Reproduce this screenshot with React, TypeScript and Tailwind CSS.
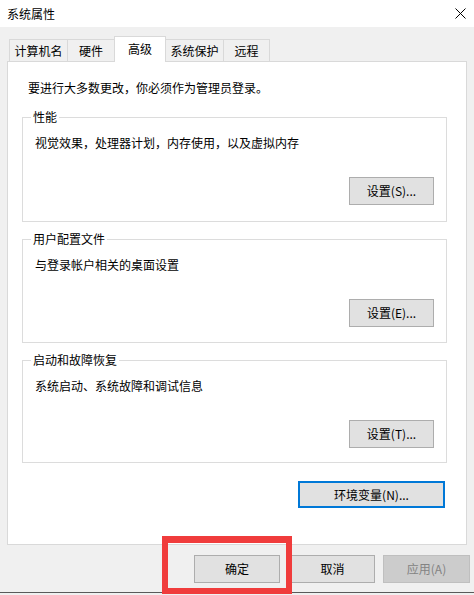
import { ReactNode } from 'react';

const FONT = '[font-family:"Microsoft_YaHei_UI","Noto_Sans_CJK_SC",sans-serif]';

const TABS = [
  { id: 'computer', label: '计算机名', w: 'w-[59px]' },
  { id: 'hardware', label: '硬件',     w: 'w-[48px]' },
  { id: 'advanced', label: '高级',     w: 'w-[52px]' },
  { id: 'protect',  label: '系统保护', w: 'w-[59px]' },
  { id: 'remote',   label: '远程',     w: 'w-[47px]' },
];

function Btn({ children, className = '' }: { children: ReactNode; className?: string }) {
  return (
    <button className={`h-[28px] flex items-center justify-center border border-[#adadad] bg-[#e1e1e1] text-[12px] leading-[16px] text-black ${className}`}>
      {children}
    </button>
  );
}

function Group({ title, text, button, h }: { title: string; text: string; button: string; h: string }) {
  return (
    <div className={`relative w-[425px] ${h} border border-[#dcdcdc] flex flex-col pt-[17px] pl-[12px] pr-[12px]`}>
      <span className="absolute -top-[9px] left-[8px] bg-white px-[2px] text-[12px] leading-[16px]">{title}</span>
      <p className="text-[12px] leading-[16px]">{text}</p>
      <div className="flex justify-end mt-[26px]">
        <Btn className="w-[85px]">{button}</Btn>
      </div>
    </div>
  );
}

export default function App() {
  return (
    <div className={`relative w-[474px] h-[595px] overflow-hidden bg-[#f0f0f0] text-black ${FONT}`}>
      {/* title bar */}
      <div className="h-[27px] bg-white flex items-center justify-between pl-[7px] pr-[8px]">
        <span className="text-[12px] leading-[16px]">系统属性</span>
        <svg width="11" height="11" viewBox="0 0 11 11" className="mt-[-1px]">
          <path d="M0.5 0.5L10.5 10.5M10.5 0.5L0.5 10.5" stroke="#000" strokeWidth="1" />
        </svg>
      </div>

      {/* tabs */}
      <div className="mt-[9px] h-[25px] flex items-end pl-[9px]">
        {TABS.map((t, i) => {
          const active = t.id === 'advanced';
          return (
            <div key={t.id}
              className={`${t.w} ${i > 0 ? '-ml-px' : ''} flex justify-center border-t border-l border-r border-[#d9d9d9] text-[12px] leading-[16px] ${active ? 'relative z-10 h-[26px] -mb-px bg-white items-start pt-[4px]' : 'h-[22px] bg-[#f0f0f0] items-center'}`}>
              {t.label}
            </div>
          );
        })}
      </div>

      {/* tab panel */}
      <div className="mx-[7px] h-[484px] border border-[#d9d9d9] bg-white flex flex-col px-[14px]">
        <p className="mt-[18px] pl-[6px] text-[12px] leading-[16px]">要进行大多数更改，你必须作为管理员登录。</p>
        <div className="mt-[21px]">
          <Group h="h-[105px]" title="性能" text="视觉效果，处理器计划，内存使用，以及虚拟内存" button="设置(S)..." />
        </div>
        <div className="mt-[17px]">
          <Group h="h-[104px]" title="用户配置文件" text="与登录帐户相关的桌面设置" button="设置(E)..." />
        </div>
        <div className="mt-[17px]">
          <Group h="h-[103px]" title="启动和故障恢复" text="系统启动、系统故障和调试信息" button="设置(T)..." />
        </div>
        <div className="mt-[18px] w-[425px] flex justify-end pr-[2px]">
          <button className="w-[147px] h-[27px] flex items-center justify-center border-2 border-[#0078d7] bg-[#e1e1e1] text-[12px] leading-[16px]">
            环境变量(N)...
          </button>
        </div>
      </div>

      {/* dialog buttons */}
      <div className="mt-[10px] flex">
        <Btn className="ml-[194px] w-[86px]">确定</Btn>
        <Btn className="ml-[10px] w-[85px]">取消</Btn>
        <button className="ml-[8px] w-[87px] h-[28px] flex items-center justify-center border border-[#bfbfbf] bg-[#cccccc] text-[12px] leading-[16px] text-[#838383]">
          应用(A)
        </button>
      </div>
      <div className="mt-[9px] h-px bg-[#5a5a5a]" />

      {/* highlight marker */}
      <div className="absolute left-[162px] top-[536px] w-[130px] h-[58px] border-[6px] border-t-[7px] border-[#f03c3c]" />
    </div>
  );
}
